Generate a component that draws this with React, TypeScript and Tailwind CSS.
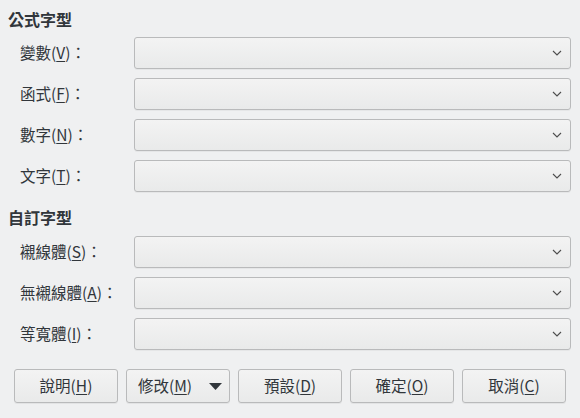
import React from "react";

const font = { fontFamily: '"Noto Sans CJK TC", "Noto Sans", sans-serif' };

function Chevron() {
  return (
    <svg width="10" height="6" viewBox="0 0 10 6" className="text-[#4d4d4d]">
      <path d="M1 1 L5 5 L9 1" fill="none" stroke="currentColor" strokeWidth="1.1" />
    </svg>
  );
}

function Row({ label, k }: { label: string; k: string }) {
  return (
    <div className="flex items-center h-[32px]">
      <div className="w-[134px] pl-[20px] text-[15.5px] text-[#31363b] whitespace-nowrap">
        {label}(<span className="underline underline-offset-2">{k}</span>)：
      </div>
      <div className="w-[437px] h-[32px] rounded-[3px] border border-[#b9babb] bg-gradient-to-b from-[#f3f3f3] to-[#e9eaea] flex items-center justify-end pr-[8px] shadow-[0_1px_0_rgba(0,0,0,0.04)]">
        <Chevron />
      </div>
    </div>
  );
}

function Btn({ label, k, menu }: { label: string; k: string; menu?: boolean }) {
  return (
    <div className="w-[104px] h-[34px] rounded-[3px] border border-[#b9babb] bg-gradient-to-b from-[#f3f3f3] to-[#e9eaea] flex items-center justify-center text-[15.5px] text-[#31363b] shadow-[0_1px_0_rgba(0,0,0,0.05)]">
      <span>
        {label}(<span className="underline underline-offset-2">{k}</span>)
      </span>
      {menu && (
        <svg width="13" height="7" viewBox="0 0 13 7" className="ml-[17px] mr-[-4px]">
          <path d="M0 0 H13 L6.5 7 Z" fill="#31363b" />
        </svg>
      )}
    </div>
  );
}

export default function App() {
  return (
    <div style={font} className="w-[580px] h-[418px] bg-[#eff0f1] overflow-hidden pt-[9px]">
      <div className="pl-[8px] h-[20px] leading-[20px] text-[16px] font-bold text-[#31363b]">公式字型</div>
      <div className="flex flex-col gap-[9px] mt-[8px]">
        <Row label="變數" k="V" />
        <Row label="函式" k="F" />
        <Row label="數字" k="N" />
        <Row label="文字" k="T" />
      </div>
      <div className="pl-[8px] h-[20px] leading-[20px] text-[16px] font-bold text-[#31363b] mt-[15px]">自訂字型</div>
      <div className="flex flex-col gap-[9px] mt-[9px]">
        <Row label="襯線體" k="S" />
        <Row label="無襯線體" k="A" />
        <Row label="等寬體" k="I" />
      </div>
      <div className="flex gap-[8px] pl-[14px] mt-[19px]">
        <Btn label="說明" k="H" />
        <Btn label="修改" k="M" menu />
        <Btn label="預設" k="D" />
        <Btn label="確定" k="O" />
        <Btn label="取消" k="C" />
      </div>
    </div>
  );
}
